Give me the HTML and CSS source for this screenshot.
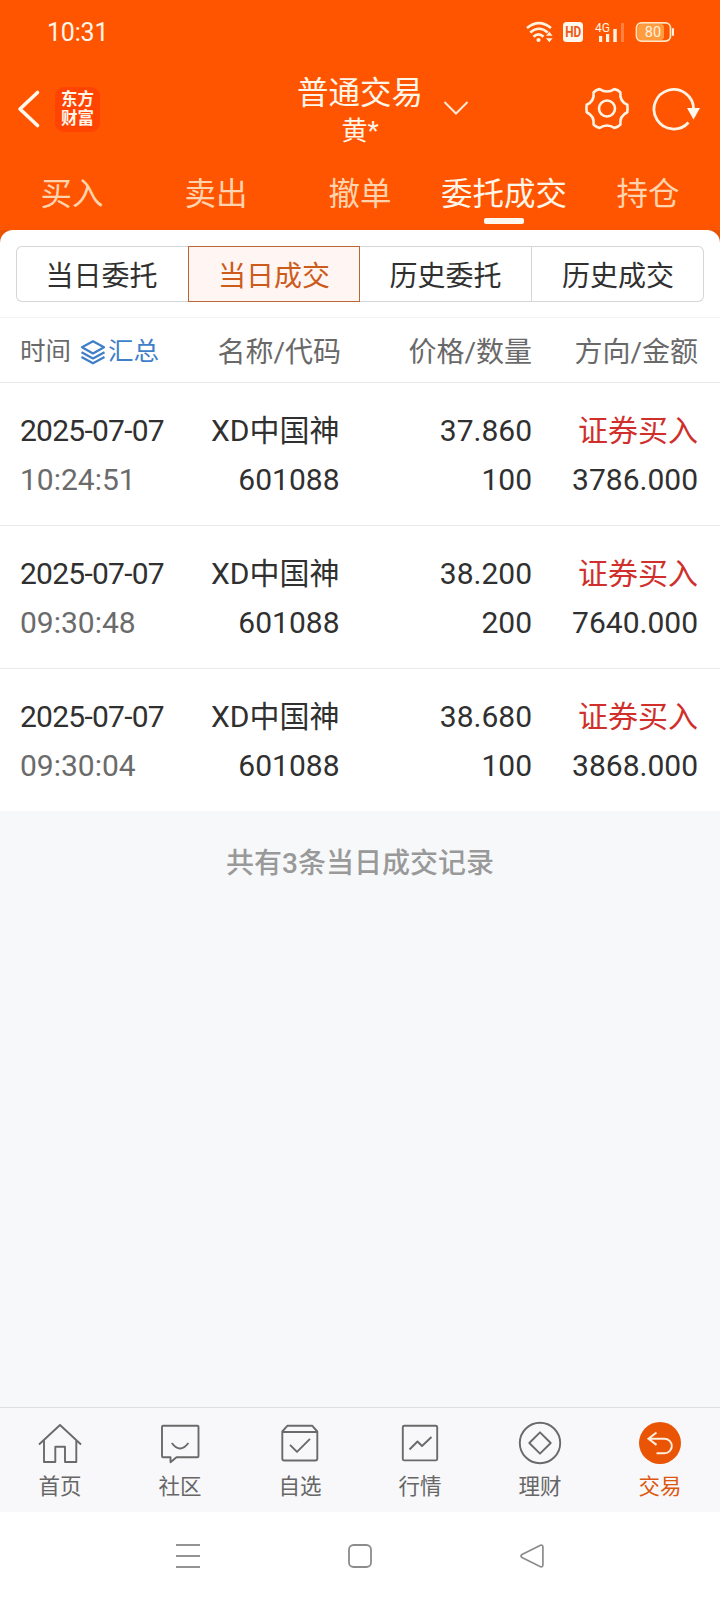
FILE: index.html
```html
<!DOCTYPE html>
<html lang="zh-CN">
<head>
<meta charset="utf-8">
<title>普通交易</title>
<link rel="stylesheet" href="styles.css">
</head>
<body>
<div class="screen">
  <header class="top">
    <div class="status">
      <span class="clock">10:31</span>
      <svg class="status-icons" viewBox="524 18 152 28" width="152" height="28">
        <g fill="none" stroke="#fff3e0" stroke-width="2.6">
          <path d="M527 28Q539 18.300 551 28"/>
          <path d="M530.300 32.500Q539 25 547.700 32.500"/>
          <path d="M533.500 36.800Q538.500 32 543.500 36.800"/>
        </g>
        <circle cx="538.500" cy="40" r="2.100" fill="#fff3e0"/>
        <path d="M546 35.800l3.300-4 3.300 4zM546 38.200l3.300 4 3.300-4z" fill="#fff3e0"/>
        <rect x="563" y="22" width="20" height="20" rx="3.500" fill="#fff8ee"/>
        <text class="hd" x="573.200" y="37" text-anchor="middle" textLength="16" lengthAdjust="spacingAndGlyphs">HD</text>
        <text class="net" x="595" y="32.300" textLength="15" lengthAdjust="spacingAndGlyphs">4G</text>
        <path d="M599 36h3.200v6H599zM606 34h3.200v8H606zM613.300 29h3.500v13h-3.500z" fill="#fff3e0"/>
        <path d="M621 23h3v19h-3z" fill="#ff8142"/>
        <rect x="638" y="24" width="26" height="16" rx="3.500" fill="#ff9c3e"/>
        <rect x="636.500" y="22.900" width="34" height="18.200" rx="5" fill="none" stroke="#ffe6bd" stroke-width="1.800"/>
        <rect x="672" y="28" width="2" height="8" rx="1" fill="#fff3e0"/>
        <text class="pct" x="653" y="37" text-anchor="middle">80</text>
      </svg>
    </div>
    <div class="titlebar">
      <div class="title-left">
        <svg viewBox="16 88 26 42" width="26" height="42"><path d="M37.500 92.500L20 109l17.500 16.500" fill="none" stroke="#fff8ee" stroke-width="3.600" stroke-linejoin="round" stroke-linecap="round"/></svg>
        <div class="logo"><span>东方</span><span>财富</span></div>
      </div>
      <div class="title"><div class="title-main">普通交易</div><div class="title-sub">黄*</div></div>
      <div class="title-right">
        <svg class="chev" viewBox="442 99.500 28 18" width="28" height="18"><path d="M444.500 101.500L456 113l11.500-11.500" fill="none" stroke="#ffe9d8" stroke-width="2"/></svg>
        <svg class="gear" viewBox="-23 -22.500 46 46" width="46" height="46">
          <g fill="none" stroke="#fff3e6" stroke-width="2.600" stroke-linejoin="round">
            <path d="M20.300-3.700Q21 0 20.300 3.700Q12.400 7.400 13.400 16.200Q11 18.800 7.400 19.400Q0 14.600-7.400 19.400Q-11 18.800-13.400 16.200Q-12.400 7.400-20.300 3.700Q-21 0-20.300-3.700Q-12.400-7.400-13.400-16.200Q-11-18.800-7.400-19.400Q0-14.600 7.400-19.400Q11-18.800 13.400-16.200Q12.400-7.400 20.300-3.700Z"/>
            <circle r="8"/>
          </g>
        </svg>
        <svg viewBox="650 85 52 46" width="52" height="46"><path d="M688.500 121.500A19.800 19.800 0 1 1 693.600 108" fill="none" stroke="#fff3e6" stroke-width="2.800"/><path d="M687 107h13l-6.500 11.500z" fill="#fff8ee"/></svg>
      </div>
    </div>
    <nav class="tabs">
      <span>买入</span><span>卖出</span><span>撤单</span><span class="on">委托成交</span><span>持仓</span>
    </nav>
  </header>
  <main class="content">
    <div class="panel-back">
      <section class="panel">
        <div class="segments">
          <span>当日委托</span><span class="sel">当日成交</span><span>历史委托</span><span>历史成交</span>
        </div>
        <div class="cols head">
          <div class="time-head"><span>时间</span>
            <svg viewBox="80 339 26 26" width="26" height="26"><g fill="none" stroke="#3f7fc9" stroke-width="2.200" stroke-linejoin="round"><path d="M93 341.200l11 6-11 6.300-11-6.300z"/><path d="M81.500 352.200l11.500 6.300 11.500-6.300M81.500 357l11.500 6.300 11.500-6.300"/></g></svg>
            <span class="blue">汇总</span></div>
          <div>名称/代码</div><div>价格/数量</div><div>方向/金额</div>
        </div>
        <div class="cols row">
          <div><p class="date">2025-07-07</p><p class="clocktime">10:24:51</p></div>
          <div class="code"><p>XD中国神</p><p>601088</p></div>
          <div><p>37.860</p><p>100</p></div>
          <div><p class="buy">证券买入</p><p>3786.000</p></div>
        </div>
        <div class="cols row">
          <div><p class="date">2025-07-07</p><p class="clocktime">09:30:48</p></div>
          <div class="code"><p>XD中国神</p><p>601088</p></div>
          <div><p>38.200</p><p>200</p></div>
          <div><p class="buy">证券买入</p><p>7640.000</p></div>
        </div>
        <div class="cols row">
          <div><p class="date">2025-07-07</p><p class="clocktime">09:30:04</p></div>
          <div class="code"><p>XD中国神</p><p>601088</p></div>
          <div><p>38.680</p><p>100</p></div>
          <div><p class="buy">证券买入</p><p>3868.000</p></div>
        </div>
      </section>
    </div>
    <p class="summary">共有3条当日成交记录</p>
  </main>
  <nav class="bottom">
    <div class="item"><svg viewBox="36 1420 48 46" width="48" height="46"><g class="ln"><path d="M39 1444.500L60 1425l21 19.500M44 1440.500V1462h11.300v-15.300h9.700V1462h11.300v-21.500"/></g></svg><span>首页</span></div>
    <div class="item"><svg viewBox="156 1420 48 46" width="48" height="46"><g class="ln"><path d="M163.500 1425.700h34q1 0 1 1v29.500q0 1-1 1h-21l-6 5v-5h-7.500q-1 0-1-1v-29.500q0-1 1-1z"/><path d="M171.800 1443q8.200 11 16.600 0"/></g></svg><span>社区</span></div>
    <div class="item"><svg viewBox="276 1420 48 46" width="48" height="46"><g class="ln"><path d="M282.300 1431.500l5-5.700h25l5 5.700v27q0 2-2 2h-31q-2 0-2-2zM282.300 1432h35M290 1444.800l7 7 13-13"/></g></svg><span>自选</span></div>
    <div class="item"><svg viewBox="396 1420 48 46" width="48" height="46"><g class="ln"><rect x="402.800" y="1425.800" width="34.400" height="34.600" rx="1.500"/><path d="M409.500 1449.500l8-8 4.500 4.500 9.500-9"/></g></svg><span>行情</span></div>
    <div class="item"><svg viewBox="516 1420 48 46" width="48" height="46"><g class="ln"><circle cx="540" cy="1443" r="20.200"/><path d="M540 1432.300l10.700 10.700-10.700 10.700-10.700-10.700z"/></g></svg><span>理财</span></div>
    <div class="item active"><svg viewBox="636 1420 48 46" width="48" height="46"><circle cx="660" cy="1443" r="21" fill="#e95504"/><path d="M656.500 1432.500l-8 6.200 8 6.200M649 1438.700h15.500a7.300 7.300 0 0 1 0 14.600h-8" fill="none" stroke="#ffeedd" stroke-width="2"/></svg><span>交易</span></div>
  </nav>
  <div class="sysnav">
    <svg viewBox="0 0 24 24" width="24" height="24"><path d="M0 1h24M0 12h24M0 23h24" stroke="#939393" stroke-width="2"/></svg>
    <svg viewBox="0 0 24 24" width="24" height="24"><rect x="1" y="1" width="22" height="22" rx="4.500" fill="none" stroke="#8c8c8c" stroke-width="1.800"/></svg>
    <svg viewBox="0 0 24 24" width="24" height="24"><path d="M20.500 1.300L2 10.500q-2 1.500 0 3l18.500 9.200q2.400.6 2.400-1.700V3q0-2.300-2.400-1.700z" fill="none" stroke="#8c8c8c" stroke-width="1.700"/></svg>
  </div>
</div>
</body>
</html>
```
FILE: styles.css
```css
* { box-sizing: border-box; }
body, p { margin: 0; }
svg { display: block; flex: none; }
.screen {
  width: 720px;
  height: 1600px;
  display: flex;
  flex-direction: column;
  background: #fff;
  font-family: Roboto, "Noto Sans CJK SC", sans-serif;
  color: #303030;
  overflow: hidden;
}
.top { height: 230px; background: #ff5500; color: #fff6ea; flex: none; }
.status { height: 64px; display: flex; align-items: center; justify-content: space-between; padding: 0 44px 0 47px; }
.clock { font: 25px/30px Roboto, sans-serif; letter-spacing: -0.2px; padding-top: 1px; }
.status-icons { font-family: Roboto, sans-serif; }
.hd { font-size: 14.5px; font-weight: 700; fill: #ee5a16; }
.net { font-size: 13px; fill: #fff3e0; }
.pct { font-size: 14.5px; fill: #fff3e0; }
.titlebar { height: 90px; display: grid; grid-template-columns: 1fr 128px 1fr; align-items: center; }
.title-left { display: flex; align-items: center; gap: 13px; padding-left: 16px; }
.logo {
  width: 45px;
  height: 45px;
  border-radius: 9px;
  background: #ff4300;
  display: flex;
  flex-direction: column;
  align-items: center;
  justify-content: center;
  font-weight: 700;
  font-size: 16.5px;
  line-height: 19px;
}
.title { text-align: center; padding-top: 5px; }
.title-main { font-size: 31.5px; line-height: 40px; white-space: nowrap; }
.title-sub { font-size: 26px; line-height: 35px; }
.title-right { display: flex; align-items: center; padding-left: 18px; }
.chev { margin-right: 114px; }
.gear { margin-right: 20px; }
.tabs { display: flex; height: 76px; }
.tabs span {
  width: 144px;
  font-size: 31.5px;
  line-height: 82px;
  text-align: center;
  color: #ffd3ae;
  display: flex;
  flex-direction: column;
  align-items: center;
}
.tabs .on { color: #fff6ea; }
.tabs .on::after { content: ""; width: 40px; height: 6px; border-radius: 2px; background: #fff8ee; margin-top: -18px; flex: none; }
.content { flex: 1; background: #f7f8fa; }
.panel-back { background: linear-gradient(#e85300 16px, #fff 16px); }
.panel { background: #fff; border-radius: 13px 13px 0 0; padding-top: 16px; }
.segments { display: flex; margin: 0 16px 15px; }
.segments span {
  width: 172px;
  height: 56px;
  border: 1px solid #d3d6d8;
  border-left-width: 0;
  font-size: 28px;
  line-height: 60px;
  text-align: center;
}
.segments span:first-child { border-left-width: 1px; border-right: 0; border-radius: 6px 0 0 6px; padding-right: 2px; }
.segments span:last-child { border-radius: 0 6px 6px 0; padding-left: 1px; }
.segments .sel { border: 1px solid #bb6635; background: #fff5f2; color: #cd5b1b; }
.cols {
  display: grid;
  grid-template-columns: 150px 171px 191px 166px;
  padding-left: 20px;
  text-align: right;
  border-bottom: 1px solid #e9eaec;
}
.head { height: 66px; border-top: 1px solid #f3f3f4; font-size: 28px; line-height: 69px; color: #696969; }
.time-head { display: flex; align-items: center; font-size: 25.5px; line-height: 66px; white-space: nowrap; height: 64px; }
.time-head span { padding-top: 2px; }
.time-head svg { margin: 3px 2px 0 9px; }
.blue { color: #3f7fc9; }
.row { height: 143px; padding-top: 23px; font-size: 30px; line-height: 49px; }
.row:last-child { height: 142px; border-bottom: 0; }
.row p { height: 49px; white-space: nowrap; }
.row > div:first-child { text-align: left; }
.code { padding-right: 1.5px; }
.date { letter-spacing: -0.75px; }
.clocktime { color: #6b6b6b; }
.row .buy { color: #d02f2c; line-height: 50px; }
.summary { margin-top: 33px; text-align: center; font-size: 28px; line-height: 40px; font-weight: 500; color: #999; }
.bottom { height: 105px; flex: none; display: flex; background: #f8f8fa; border-top: 1px solid #dedfe1; }
.item { width: 120px; padding-top: 12px; display: flex; flex-direction: column; align-items: center; font-size: 21.5px; line-height: 42px; color: #666; }
.item.active { color: #dd570f; }
.ln { fill: none; stroke: #6a6a6a; stroke-width: 1.900; stroke-linejoin: round; }
.sysnav { height: 88px; flex: none; display: flex; align-items: center; justify-content: center; gap: 148px; }
```
